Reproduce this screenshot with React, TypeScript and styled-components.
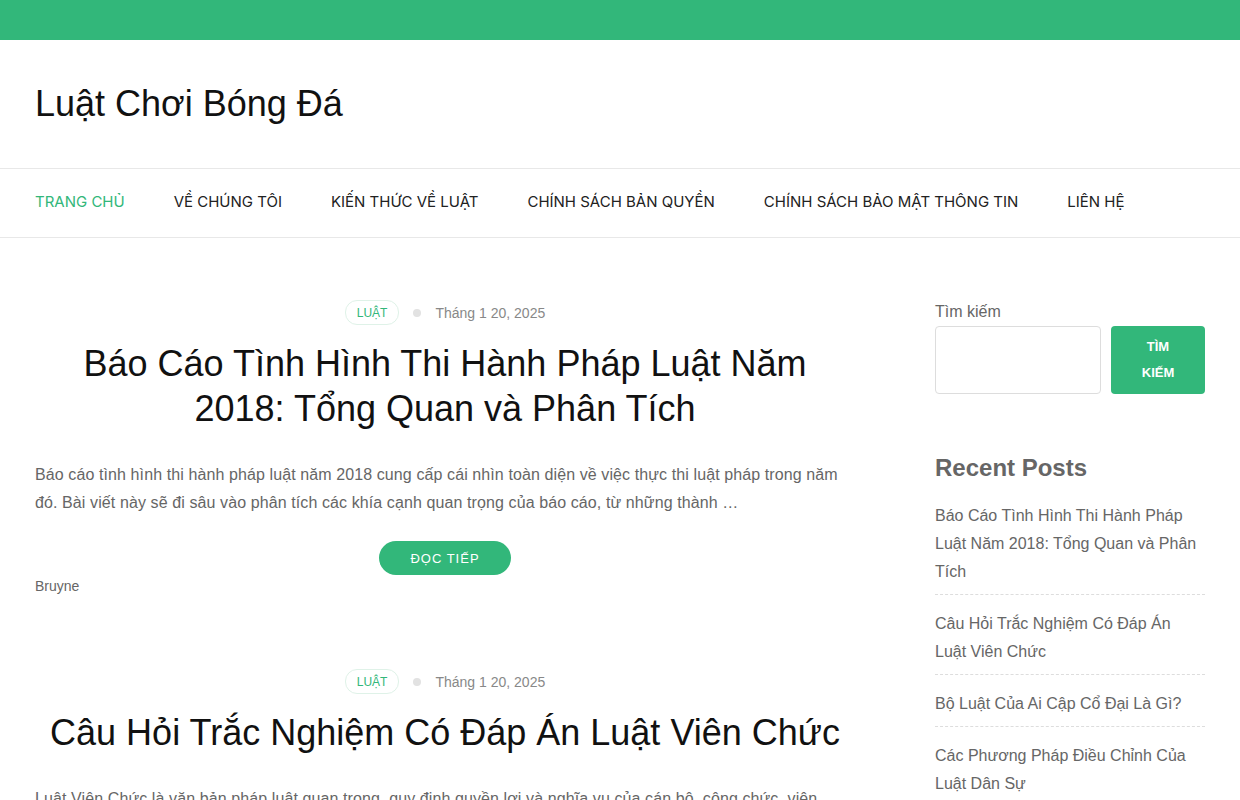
import styled, { createGlobalStyle } from 'styled-components';

const green = '#32b77a';

const GlobalStyle = createGlobalStyle`
  body {
    margin: 0;
    background: #fff;
    font-family: 'Liberation Sans', Arial, sans-serif;
  }
`;

const TopBar = styled.div`
  height: 40px;
  background: ${green};
`;

const Header = styled.header`
  height: 128px;
  display: flex;
  align-items: center;
  padding: 0 35px;
  border-bottom: 1px solid #e8e8e8;
`;

const SiteTitle = styled.h1`
  margin: 0;
  font-size: 36px;
  font-weight: 400;
  color: #111;
`;

const Nav = styled.nav`
  height: 68px;
  display: flex;
  align-items: center;
  gap: 49px;
  padding: 0 35px;
  border-bottom: 1px solid #e8e8e8;
`;

const NavItem = styled.a<{ $active?: boolean }>`
  font-family: Inter, Roboto, 'Liberation Sans', sans-serif;
  font-size: 15px;
  color: ${(p) => (p.$active ? green : '#222')};
  text-decoration: none;
  text-transform: uppercase;
  margin-bottom: 4px;
`;

const Container = styled.div`
  display: grid;
  grid-template-columns: 820px 270px;
  gap: 80px;
  padding: 62px 35px 0;
`;

const Main = styled.main`
  display: flex;
  flex-direction: column;
  gap: 75px;
`;

const Post = styled.article`
  display: flex;
  flex-direction: column;
`;

const Meta = styled.div`
  display: flex;
  justify-content: center;
  align-items: center;
  gap: 14px;
`;

const Tag = styled.span`
  font-size: 12px;
  color: ${green};
  border: 1px solid #dff2e8;
  border-radius: 12px;
  height: 25px;
  padding: 0 11px;
  display: flex;
  align-items: center;
  box-sizing: border-box;
`;

const Dot = styled.span`
  width: 8px;
  height: 8px;
  border-radius: 50%;
  background: #e2e2e2;
`;

const Date = styled.span`
  font-size: 14px;
  color: #888;
`;

const PostTitle = styled.h2`
  margin: 16px 0 0;
  font-size: 36px;
  line-height: 45px;
  font-weight: 400;
  color: #111;
  text-align: center;
`;

const Excerpt = styled.p`
  margin: 30px 0 0;
  font-size: 16px;
  line-height: 28px;
  letter-spacing: 0.1px;
  color: #666;
`;

const ReadMore = styled.a`
  align-self: center;
  margin-top: 24px;
  height: 34px;
  width: 132px;
  border-radius: 17px;
  background: ${green};
  color: #fff;
  font-size: 13px;
  letter-spacing: 1px;
  display: flex;
  align-items: center;
  justify-content: center;
`;

const Author = styled.div`
  font-size: 14px;
  color: #666;
  margin-top: 3px;
`;

const Sidebar = styled.aside`
  display: flex;
  flex-direction: column;
`;

const SearchLabel = styled.label`
  font-size: 16px;
  color: #666;
  line-height: 20px;
  margin-top: 2px;
  margin-bottom: 4px;
`;

const SearchRow = styled.div`
  display: flex;
  gap: 10px;
`;

const SearchInput = styled.input`
  width: 166px;
  height: 68px;
  box-sizing: border-box;
  border: 1px solid #ddd;
  border-radius: 4px;
  outline: none;
`;

const SearchButton = styled.button`
  flex: 1;
  height: 68px;
  border: 0;
  border-radius: 4px;
  background: ${green};
  color: #fff;
  font-family: 'Liberation Sans', Arial, sans-serif;
  font-weight: 700;
  font-size: 13px;
  line-height: 26px;
  padding: 0 20px;
`;

const WidgetTitle = styled.h3`
  margin: 58px 0 18px;
  font-size: 24px;
  font-weight: 700;
  color: #666;
  line-height: 32px;
`;

const RecentList = styled.ul`
  list-style: none;
  margin: 0;
  padding: 0;
`;

const RecentItem = styled.li`
  font-size: 16px;
  line-height: 28px;
  color: #666;
  padding-bottom: 8px;
  margin-bottom: 15px;
  border-bottom: 1px dashed #ddd;
`;

const posts = [
  {
    title: 'Báo Cáo Tình Hình Thi Hành Pháp Luật Năm 2018: Tổng Quan và Phân Tích',
    excerpt:
      'Báo cáo tình hình thi hành pháp luật năm 2018 cung cấp cái nhìn toàn diện về việc thực thi luật pháp trong năm đó. Bài viết này sẽ đi sâu vào phân tích các khía cạnh quan trọng của báo cáo, từ những thành …',
  },
  {
    title: 'Câu Hỏi Trắc Nghiệm Có Đáp Án Luật Viên Chức',
    excerpt:
      'Luật Viên Chức là văn bản pháp luật quan trọng, quy định quyền lợi và nghĩa vụ của cán bộ, công chức, viên chức trong hệ thống hành chính nhà nước. Bài viết này cung cấp bộ câu hỏi trắc nghiệm …',
  },
];

const navItems = [
  'Trang chủ',
  'Về chúng tôi',
  'Kiến thức về luật',
  'Chính sách bản quyền',
  'Chính sách bảo mật thông tin',
  'Liên hệ',
];

const recent = [
  'Báo Cáo Tình Hình Thi Hành Pháp Luật Năm 2018: Tổng Quan và Phân Tích',
  'Câu Hỏi Trắc Nghiệm Có Đáp Án Luật Viên Chức',
  'Bộ Luật Của Ai Cập Cổ Đại Là Gì?',
  'Các Phương Pháp Điều Chỉnh Của Luật Dân Sự',
];

export default function App() {
  return (
    <>
      <GlobalStyle />
      <TopBar />
      <Header>
        <SiteTitle>Luật Chơi Bóng Đá</SiteTitle>
      </Header>
      <Nav>
        {navItems.map((item, i) => (
          <NavItem key={item} $active={i === 0}>
            {item}
          </NavItem>
        ))}
      </Nav>
      <Container>
        <Main>
          {posts.map((post) => (
            <Post key={post.title}>
              <Meta>
                <Tag>LUẬT</Tag>
                <Dot />
                <Date>Tháng 1 20, 2025</Date>
              </Meta>
              <PostTitle>{post.title}</PostTitle>
              <Excerpt>{post.excerpt}</Excerpt>
              <ReadMore>ĐỌC TIẾP</ReadMore>
              <Author>Bruyne</Author>
            </Post>
          ))}
        </Main>
        <Sidebar>
          <SearchLabel>Tìm kiếm</SearchLabel>
          <SearchRow>
            <SearchInput />
            <SearchButton>TÌM KIẾM</SearchButton>
          </SearchRow>
          <WidgetTitle>Recent Posts</WidgetTitle>
          <RecentList>
            {recent.map((r) => (
              <RecentItem key={r}>{r}</RecentItem>
            ))}
          </RecentList>
        </Sidebar>
      </Container>
    </>
  );
}
